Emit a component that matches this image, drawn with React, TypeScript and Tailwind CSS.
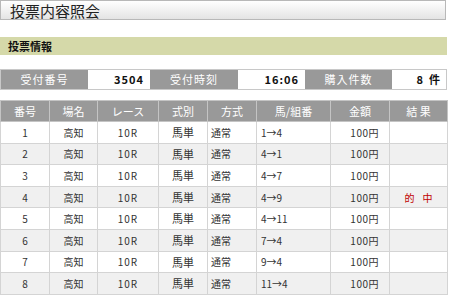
import React from "react";

const rows = [
  ["1", "1→4", ""],
  ["2", "4→1", ""],
  ["3", "4→7", ""],
  ["4", "4→9", "的"],
  ["5", "4→11", ""],
  ["6", "7→4", ""],
  ["7", "9→4", ""],
  ["8", "11→4", ""],
];

const font = { fontFamily: '"Noto Sans CJK JP", "Noto Sans", sans-serif' };

export default function App() {
  return (
    <div className="w-[450px] h-[295px] bg-white overflow-hidden text-[#333]" style={font}>
      <div className="w-[446px] h-[20px] border border-[#b8b8b8] bg-gradient-to-b from-white to-[#e4e4e4] flex items-center pl-[9px] text-[15px] leading-none text-[#222]">
        投票内容照会
      </div>
      <div className="mt-[17px] w-[447px] h-[18px] bg-[#d5d9a9] flex items-center pl-[8px] text-[11px] font-bold text-[#111]">
        投票情報
      </div>
      <div className="mt-[14px] w-[447px] h-[21px] flex text-[11px] border border-[#c8c8c8]">
        <div className="w-[87px] bg-[#999] text-white flex items-center justify-center tracking-[1px]">受付番号</div>
        <div className="w-[62px] bg-white flex items-center justify-end pr-[6px] font-bold text-[#111] tracking-[1px]">3504</div>
        <div className="w-[88px] bg-[#999] text-white flex items-center justify-center tracking-[1px]">受付時刻</div>
        <div className="w-[67px] bg-white flex items-center justify-end pr-[6px] font-bold text-[#111] tracking-[1px]">16:06</div>
        <div className="w-[87px] bg-[#999] text-white flex items-center justify-center tracking-[1px]">購入件数</div>
        <div className="flex-1 bg-white flex items-center justify-end gap-[6px] pr-[6px] font-bold text-[#111]">
          <span>8</span>
          <span>件</span>
        </div>
      </div>
      <table className="mt-[10px] w-[447px] border-collapse table-fixed text-[10px]">
        <colgroup>
          <col className="w-[49px]" />
          <col className="w-[48px]" />
          <col className="w-[61px]" />
          <col className="w-[49px]" />
          <col className="w-[49px]" />
          <col className="w-[74px]" />
          <col className="w-[59px]" />
          <col className="w-[58px]" />
        </colgroup>
        <thead>
          <tr className="h-[21px] bg-[#999] text-white text-[11px]">
            {["番号", "場名", "レース", "式別", "方式", "馬/組番", "金額", "結 果"].map((h) => (
              <th key={h} className="font-normal border border-[#c4c4c4] p-0 text-center">{h}</th>
            ))}
          </tr>
        </thead>
        <tbody>
          {rows.map(([n, combo, res], i) => (
            <tr key={n} className={`h-[21.6px] ${i % 2 === 1 ? "bg-[#f0f0f0]" : "bg-white"}`}>
              <td className="border border-[#d4d4d4] p-0 text-center">{n}</td>
              <td className="border border-[#d4d4d4] p-0 text-center">高知</td>
              <td className="border border-[#d4d4d4] p-0 text-center tracking-[1px]">10R</td>
              <td className="border border-[#d4d4d4] p-0 text-center text-[11px]">馬単</td>
              <td className="border border-[#d4d4d4] p-0 pl-[3px] text-left">通常</td>
              <td className="border border-[#d4d4d4] p-0 pl-[4px] text-left">{combo}</td>
              <td className="border border-[#d4d4d4] p-0 pr-[10px] text-right tracking-[0.5px]">100円</td>
              <td className="border border-[#d4d4d4] p-0 text-center text-[#c00000]">
                {res ? (
                  <span className="inline-flex gap-[8px]">
                    <span>的</span>
                    <span>中</span>
                  </span>
                ) : null}
              </td>
            </tr>
          ))}
        </tbody>
      </table>
    </div>
  );
}
